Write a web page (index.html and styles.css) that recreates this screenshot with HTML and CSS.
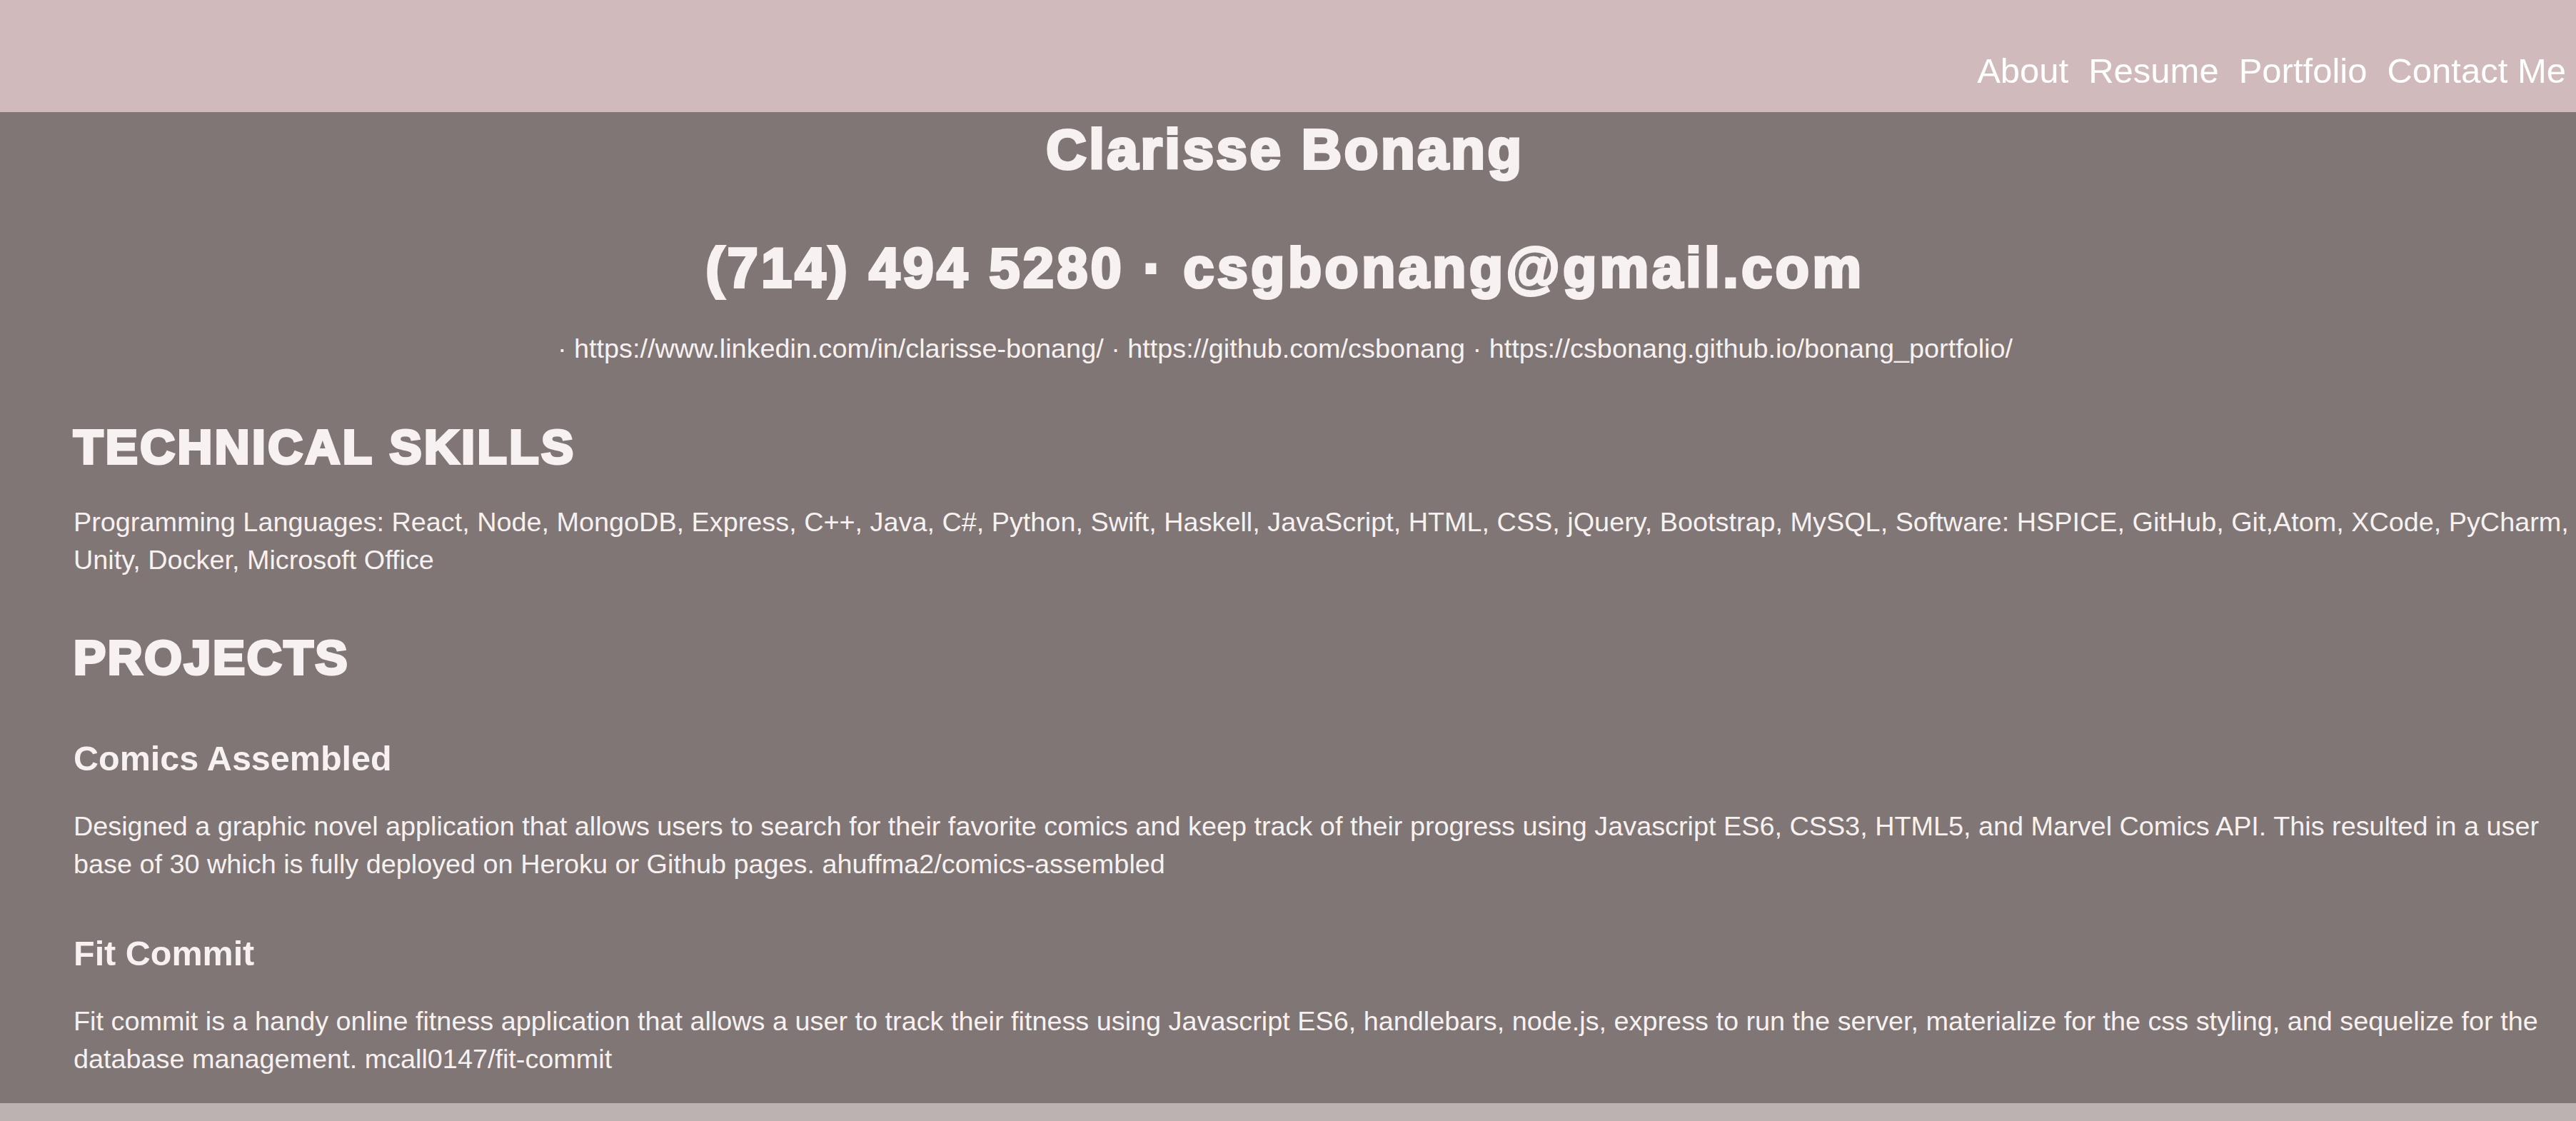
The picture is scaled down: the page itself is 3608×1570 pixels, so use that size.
FILE: index.html
```html
<!DOCTYPE html>
<html lang="en">
<head>
<meta charset="utf-8">
<title>Clarisse Bonang - Resume</title>
<link rel="stylesheet" href="styles.css">
</head>
<body>
<header class="site-header">
  <nav class="nav">
    <a class="nav-link" href="#">About</a>
    <a class="nav-link" href="#">Resume</a>
    <a class="nav-link" href="#">Portfolio</a>
    <a class="nav-link" href="#">Contact Me</a>
  </nav>
</header>
<main class="resume">
  <div class="intro">
    <h1 class="name">Clarisse Bonang</h1>
    <h1 class="contact">(714) 494 5280 · csgbonang@gmail.com</h1>
    <p class="links">· <a href="#">https://www.linkedin.com/in/clarisse-bonang/</a> · <a href="#">https://github.com/csbonang</a> · <a href="#">https://csbonang.github.io/bonang_portfolio/</a></p>
  </div>
  <section class="block skills">
    <h2 class="block-title">TECHNICAL SKILLS</h2>
    <p class="text">Programming Languages: React, Node, MongoDB, Express, C++, Java, C#, Python, Swift, Haskell, JavaScript, HTML, CSS, jQuery, Bootstrap, MySQL, Software: HSPICE, GitHub, Git,Atom, XCode, PyCharm, Unity, Docker, Microsoft Office</p>
  </section>
  <section class="block projects">
    <h2 class="block-title title-projects">PROJECTS</h2>
    <article class="project">
      <h3 class="project-title">Comics Assembled</h3>
      <p class="text">Designed a graphic novel application that allows users to search for their favorite comics and keep track of their progress using Javascript ES6, CSS3, HTML5, and Marvel Comics API. This resulted in a user base of 30 which is fully deployed on Heroku or Github pages. ahuffma2/comics-assembled</p>
    </article>
    <article class="project project-next">
      <h3 class="project-title">Fit Commit</h3>
      <p class="text">Fit commit is a handy online fitness application that allows a user to track their fitness using Javascript ES6, handlebars, node.js, express to run the server, materialize for the css styling, and sequelize for the database management. mcall0147/fit-commit</p>
    </article>
  </section>
</main>
</body>
</html>
```

FILE: styles.css
```css
html, body {
  margin: 0;
  padding: 0;
}

body {
  background: #bcb2b1;
  font-family: "Liberation Sans", Arial, sans-serif;
  color: #f7f1f1;
  min-height: 1570px;
}

a {
  color: inherit;
  text-decoration: none;
}

.site-header {
  box-sizing: border-box;
  height: 157px;
  background: #d0babb;
  display: flex;
  justify-content: flex-end;
  align-items: flex-end;
  padding: 0 0 30px 0;
}

.nav {
  display: flex;
}

.nav-link {
  font-size: 49px;
  line-height: normal;
  color: #ffffff;
  padding: 0 14px;
}

.resume {
  background: #7f7675;
  padding: 7px 0 35px 0;
}

.intro {
  text-align: center;
  margin-right: 8px;
}

.name,
.contact,
.block-title {
  font-weight: 700;
  line-height: normal;
  -webkit-text-stroke: 4px #f7f1f1;
  margin: 0;
}

.name {
  font-size: 78px;
  letter-spacing: 3.6px;
}

.contact {
  font-size: 77px;
  letter-spacing: 4.6px;
  margin-top: 76px;
}

.links {
  font-size: 37.8px;
  line-height: normal;
  margin: 47px 0 0 0;
}

.block {
  padding-left: 103px;
}

.block-title {
  font-size: 67.5px;
  letter-spacing: 3.5px;
  margin-top: 77px;
}

.title-projects {
  margin-top: 71px;
  letter-spacing: 2.8px;
}

.text {
  font-size: 37.8px;
  line-height: 53px;
  margin: 41px 0 0 0;
}

.project-title {
  font-size: 48.5px;
  font-weight: 700;
  line-height: normal;
  margin: 75px 0 0 0;
}

.project-next .project-title {
  margin-top: 70px;
}
```
